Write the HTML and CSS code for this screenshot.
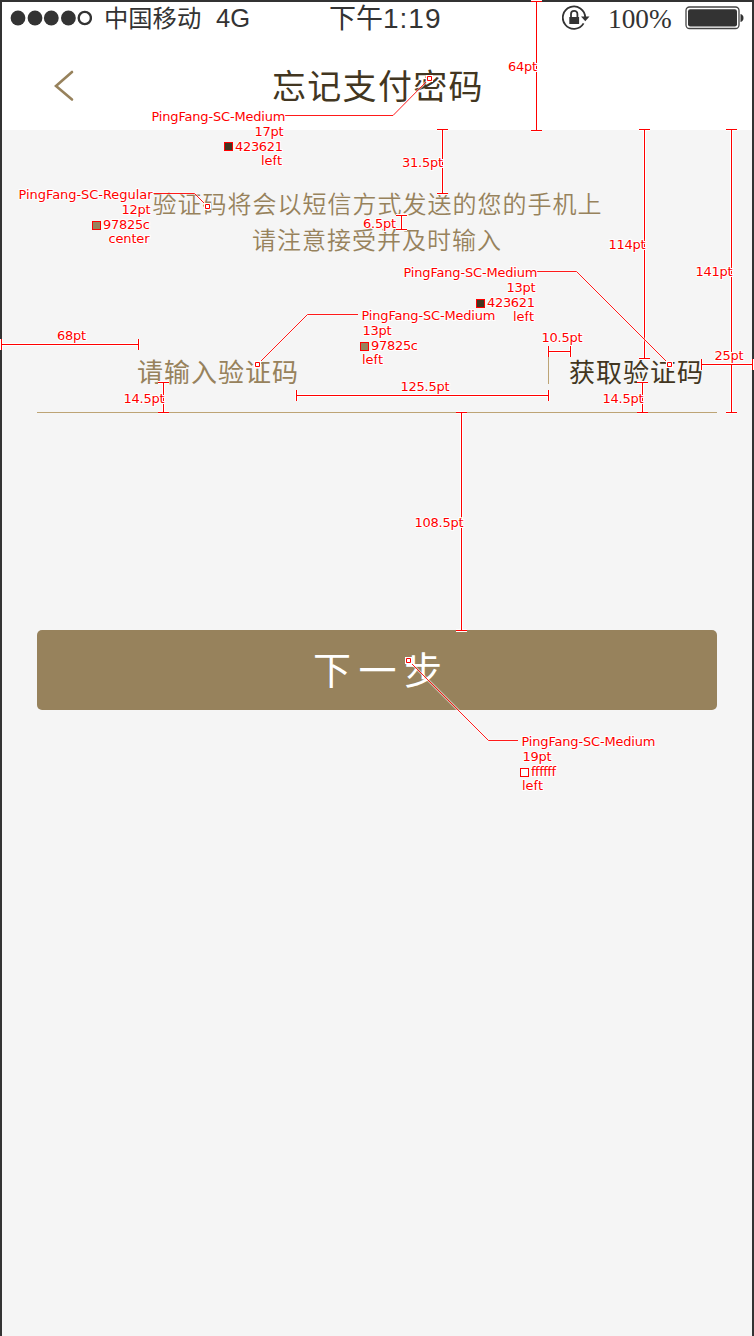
FILE: index.html
```html
<!DOCTYPE html>
<html lang="zh-CN">
<head>
<meta charset="utf-8">
<title>忘记支付密码</title>
<link rel="stylesheet" href="styles.css">
</head>
<body>
<div class="screen">
  <header class="header">
    <div class="status">
      <svg class="signal" width="82" height="16" viewBox="0 0 82 16">
        <circle cx="8" cy="8" r="7.4"/><circle cx="25" cy="8" r="7.4"/><circle cx="41.3" cy="8" r="7.4"/><circle cx="58.4" cy="8" r="7.4"/>
        <circle class="ring" cx="74.8" cy="8" r="6.1"/>
      </svg>
      <span class="carrier">中国移动</span>
      <span class="network">4G</span>
      <span class="time">下午<span class="digits">1:19</span></span>
      <svg class="lock" width="28" height="26" viewBox="0 0 28 26">
        <path class="arc" d="M23.2 12.5A11.2 11.2 0 1 0 21.6 18.4"/>
        <path d="M19 11.5h8.5l-4.2 4.8z"/>
        <rect x="7.3" y="12" width="9.8" height="7"/>
        <path class="shackle" d="M9 12V9a3.2 3.2 0 0 1 6.4 0v3"/>
      </svg>
      <span class="percent">100%</span>
      <svg class="battery" width="60" height="24" viewBox="0 0 60 24">
        <rect class="shell" x="1" y="1" width="53" height="21.5" rx="3.5"/>
        <rect x="3" y="3.2" width="49" height="17.3" rx="2.2"/>
        <path d="M55.5 8c4 .5 4 7.500 0 8z"/>
      </svg>
    </div>
    <div class="nav">
      <svg class="back" width="20" height="32" viewBox="0 0 20 32"><path d="M18 2L2 16l16 13.500"/></svg>
      <h1 class="title">忘记支付密码</h1>
    </div>
  </header>
  <main class="main">
    <p class="hint">验证码将会以短信方式发送的您的手机上<br>请注意接受并及时输入</p>
    <div class="code-row">
      <span class="placeholder">请输入验证码</span>
      <span class="divider"></span>
      <span class="get-code">获取验证码</span>
    </div>
    <div class="next">下一步</div>
  </main>
</div>

<svg class="specs" width="754" height="1336" viewBox="0 0 754 1336">
  <defs>
    <path id="rules" d="M536.5 1V131M531 1.500h11M531 130.500h11
      M442.500 129V194M437 129.500h11M437 193.500h11
      M401.500 215V230M396 215.500h11M396 229.500h11
      M644.500 129V359M639 129.500h11M639 358.500h11
      M731.500 129V413M726 129.500h11M726 412.500h11
      M1 344.500H139M1.500 339v11M138.500 339v11
      M163.500 382V413M158 382.500h11M158 412.500h11
      M296 395.500H549M296.500 390v11M548.500 390v11
      M548 351.500H571M548.500 346v11M570.500 346v11
      M701 364.500H753M701.500 359v11M752.500 359v11
      M642.500 382V413M637 382.500h11M637 412.500h11
      M461.500 412V631M456 412.500h11M456 630.500h11"/>
    <path id="leaders" d="M285 115.500H393L429.500 78.500M153 193.500H194.500L207.500 206.500M358 314.500H307.500L257.500 364.500M537 271.500H576.500L669.500 364.500M518 740.500H488.500L408.500 660.500"/>
    <path id="anchors" d="M427.500 76.500h4v4h-4zM205.500 204.500h4v4h-4zM255.500 362.500h4v4h-4zM667.500 362.500h4v4h-4zM406.500 658.500h4v4h-4z"/>
  </defs>
  <use href="#rules" class="halo"/><use href="#rules" class="rule"/>
  <use href="#leaders" class="leader-halo"/><use href="#leaders" class="leader"/>
  <use href="#anchors" class="halo"/><use href="#anchors" class="anchor"/>
  <g class="labels">
    <text x="508" y="71" textLength="29">64pt</text>
    <text x="402" y="167" textLength="41">31.5pt</text>
    <text x="363" y="228" textLength="33">6.5pt</text>
    <text x="608.500" y="249" textLength="37">114pt</text>
    <text x="695.500" y="276" textLength="37">141pt</text>
    <text x="57" y="340" textLength="29">68pt</text>
    <text x="123.500" y="403" textLength="41">14.5pt</text>
    <text x="400.500" y="391" textLength="49">125.5pt</text>
    <text x="541.500" y="342" textLength="41">10.5pt</text>
    <text x="714.500" y="360" textLength="29">25pt</text>
    <text x="602.500" y="403" textLength="41">14.5pt</text>
    <text x="414.500" y="527" textLength="49">108.5pt</text>

    <text x="151.500" y="121" textLength="134">PingFang-SC-Medium</text>
    <text x="254.500" y="136" textLength="29">17pt</text>
    <text x="235" y="151" textLength="48">423621</text>
    <text x="261" y="165" textLength="21">left</text>

    <text x="18.500" y="199" textLength="134">PingFang-SC-Regular</text>
    <text x="121.500" y="214" textLength="29">12pt</text>
    <text x="103" y="229" textLength="47">97825c</text>
    <text x="108.500" y="243" textLength="41">center</text>

    <text x="361.500" y="320" textLength="134">PingFang-SC-Medium</text>
    <text x="362.500" y="335" textLength="29">13pt</text>
    <text x="371" y="350" textLength="47">97825c</text>
    <text x="362" y="364" textLength="21">left</text>

    <text x="403.500" y="277" textLength="134">PingFang-SC-Medium</text>
    <text x="506.500" y="292" textLength="29">13pt</text>
    <text x="487" y="307" textLength="48">423621</text>
    <text x="513" y="321" textLength="21">left</text>

    <text x="521.500" y="746" textLength="134">PingFang-SC-Medium</text>
    <text x="522.500" y="761" textLength="29">19pt</text>
    <text class="tight" x="531" y="776">ffffff</text>
    <text x="522" y="790" textLength="21">left</text>
  </g>
  <g class="swatches">
    <rect class="dark" x="224.500" y="142.500" width="8" height="8"/>
    <rect class="gold" x="92.500" y="221.500" width="8" height="8"/>
    <rect class="gold" x="360.500" y="342.500" width="8" height="8"/>
    <rect class="dark" x="476.500" y="299.500" width="8" height="8"/>
    <rect class="white" x="520.500" y="768.500" width="8" height="8"/>
  </g>
</svg>
</body>
</html>
```
FILE: styles.css
```css
* { box-sizing: border-box; }
body {
  margin: 0;
  position: relative;
  width: 754px;
  height: 1336px;
  overflow: hidden;
  font-family: "Noto Sans CJK SC", sans-serif;
}
.screen {
  height: 1336px;
  border: 2px solid #333;
  border-bottom: 0;
  background: #f5f5f5;
}
.header { height: 128px; background: #fff; }
.status {
  display: flex;
  align-items: center;
  height: 32px;
  padding-left: 8px;
  color: #333;
  fill: #333;
  line-height: 32px;
  white-space: nowrap;
}
.status > * { flex: none; }
.ring { fill: none; stroke: #333; stroke-width: 2.4; }
.carrier { width: 112px; margin-left: 12px; padding-bottom: 2px; font-size: 24.300px; }
.network { width: 113px; padding-bottom: 1px; font: 25.500px/32px "Liberation Sans", sans-serif; }
.time { width: 233px; font-size: 27px; }
.digits { font-family: "Liberation Sans", sans-serif; font-size: 28px; letter-spacing: 1px; }
.arc, .shackle { fill: none; stroke: #333; stroke-width: 1.800; }
.percent { width: 77px; margin-left: 18px; padding-top: 2px; font: 27.300px/32px "Liberation Serif", serif; }
.shell { fill: #fff; stroke: #444; stroke-width: 1.300; }
.nav { display: flex; align-items: center; height: 96px; padding: 0 0 0 52px; }
.back { fill: none; stroke: #97825c; stroke-width: 2.600; stroke-linecap: round; margin-top: 8px; }
.title {
  margin: 5px 0 0 198px;
  color: #423621;
  font-size: 34px;
  font-weight: 400;
  line-height: 48px;
  letter-spacing: 1.300px;
}
.main { padding: 55px 35px 0; }
.hint {
  margin: 0;
  color: #97825c;
  font-size: 24px;
  font-weight: 350;
  line-height: 36px;
  letter-spacing: 1px;
  text-align: center;
  text-indent: 1px;
  white-space: nowrap;
}
.code-row {
  display: flex;
  align-items: center;
  height: 65px;
  margin-top: 91px;
  padding: 0 0 19px 100px;
  border-bottom: 1px solid #bda475;
  font-size: 26px;
  line-height: 36px;
  letter-spacing: 1px;
  white-space: nowrap;
}
.placeholder { width: 411px; color: #97825c; }
.divider { width: 1px; height: 27px; margin-right: 20px; background: #bda475; }
.get-code { color: #423621; }
.next {
  height: 80px;
  margin-top: 217px;
  border-radius: 5px;
  background: #97825c;
  color: #fff;
  font-size: 38px;
  line-height: 76px;
  letter-spacing: 7.500px;
  text-indent: 8.500px;
  text-align: center;
}
.specs { position: absolute; left: 0; top: 0; fill: none; }
.halo { stroke: #fff; stroke-width: 3; }
.rule { stroke: #f00; }
.leader-halo { stroke: #fff; stroke-opacity: .5; stroke-width: 2.500; }
.leader { stroke: #f00; stroke-width: .9; }
.anchor { fill: #fff; stroke: #f00; }
.labels {
  fill: #f00;
  stroke: #fff;
  stroke-width: 2px;
  paint-order: stroke;
  font: 13px "DejaVu Sans", sans-serif;
}
.tight { letter-spacing: -.5px; }
.swatches { stroke: #f00; }
.dark { fill: #423621; }
.gold { fill: #97825c; }
.white { fill: #fff; }
```
